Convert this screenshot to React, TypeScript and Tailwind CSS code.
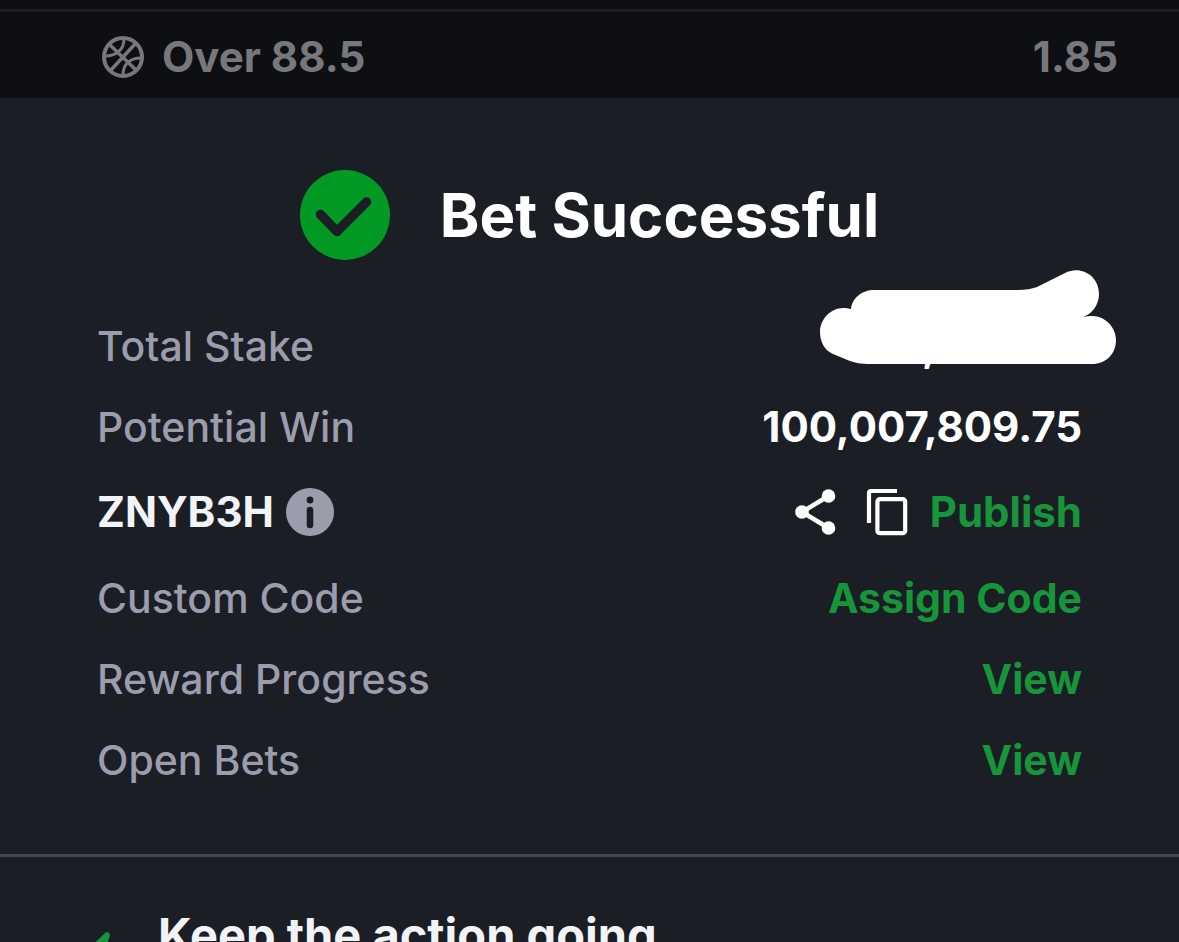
import React from 'react';

// --- Icons ---

const BasketballIcon = () => (
  <svg viewBox="0 0 42 42" className="size-[42px] shrink-0" fill="none" stroke="currentColor" strokeWidth="3" aria-hidden="true">
    <circle cx="21" cy="21" r="19" strokeWidth="4" />
    <path d="M7 8 L35 35 M34 7 L8 35" strokeWidth="3.5" />
    <path d="M22 3 C22 14 14 20 3 20" />
    <path d="M39 22 C28 22 21 28 21 39" />
  </svg>
);

const CheckIcon = () => (
  <svg viewBox="0 0 90 90" className="size-[90px] shrink-0" aria-hidden="true">
    <circle cx="45" cy="45" r="45" fill="#029a24" />
    <path d="M20.5 44.5 L37 61.5 L66.5 32" fill="none" stroke="#1c1e26" strokeWidth="9.5" strokeLinecap="round" strokeLinejoin="round" />
  </svg>
);

const InfoIcon = () => (
  <svg viewBox="0 0 48 48" className="size-12" aria-hidden="true">
    <circle cx="24" cy="24" r="24" fill="#9b9dad" />
    <circle cx="24" cy="12" r="3.4" fill="#1c1e26" />
    <path d="M24 22 V37" stroke="#1c1e26" strokeWidth="6.6" strokeLinecap="round" />
  </svg>
);

const ShareIcon = () => (
  <svg viewBox="0 0 42 48" className="h-12 w-[42px]" aria-hidden="true">
    <path d="M34.5 8 L8 24 L34.5 40" fill="none" stroke="#fff" strokeWidth="4.5" />
    <circle cx="34.5" cy="8" r="6.8" fill="#fff" />
    <circle cx="8" cy="24" r="6.8" fill="#fff" />
    <circle cx="34.5" cy="40" r="6.8" fill="#fff" />
  </svg>
);

const CopyIcon = () => (
  <svg viewBox="0 0 42 48" className="h-12 w-[42px]" fill="none" stroke="#fff" strokeWidth="4.2" aria-hidden="true">
    <path d="M3 35 V5 Q3 3 5 3 H31" />
    <rect x="11.4" y="11.2" width="27.8" height="34" rx="2.5" />
  </svg>
);

const BoltIcon = () => (
  <svg viewBox="0 0 68 60" className="h-[60px] w-[68px] shrink-0" aria-hidden="true">
    <path d="M17 29 L2 43 L-4 55 L8 58 L14 42 L18 30 Z" fill="#17953a" stroke="#17953a" strokeWidth="4" strokeLinejoin="round" />
  </svg>
);

// White marker stroke that hides the stake amount
const Scribble = () => (
  <svg viewBox="0 0 296 95" className="absolute -top-[51px] -right-[34px] h-[95px] w-[296px]" aria-hidden="true">
    <path
      fill="#fff"
      d="M31 39 C32 28 42 20 54 20 H198 C205 20 212 19 217 17 L245 3 C261 -5 279 6 279 24 C279 35 272 44 263 47 Q267 46 272 46 C286 46 296 58 296 70 C296 84 286 94 272 94 H48 Q38 94 30 91 L13 84 C4 80 0 71 0 62 C0 49 11 38 23 38 Q28 38 31 39 Z"
    />
  </svg>
);

// --- Rows ---

type RowProps = {
  label: string;
  children: React.ReactNode;
};

const Row = ({ label, children }: RowProps) => (
  <div className="flex h-[81px] items-center justify-between">
    <dt className="text-[41px] font-medium text-[#9b9dad]">{label}</dt>
    <dd className="font-bold">{children}</dd>
  </div>
);

const links = [
  { label: 'Custom Code', action: 'Assign Code' },
  { label: 'Reward Progress', action: 'View' },
  { label: 'Open Bets', action: 'View' },
];

export default function App() {
  return (
    <div className="flex h-screen flex-col overflow-hidden bg-[#1c1e26] font-['Inter',sans-serif] text-[42px] leading-[50px] text-white">
      <header className="shrink-0 bg-[#0e0f13] pt-[9px] font-bold text-[#77787b]">
        <div className="flex h-[89px] items-center justify-between border-t-3 border-[#1c1e23] pt-1 pr-[61px] pl-[102px]">
          <div className="flex items-center gap-[18px]">
            <BasketballIcon />
            <span>Over 88.5</span>
          </div>
          <span>1.85</span>
        </div>
      </header>

      <main className="shrink-0 border-b-3 border-[#434556] px-[97px] pt-[72px] pb-[54px]">
        <div className="flex items-center justify-center gap-[50px]">
          <CheckIcon />
          <h1 className="text-[60px] leading-[90px] font-bold">Bet Successful</h1>
        </div>

        <dl className="mt-[45px]">
          <Row label="Total Stake">
            <div className="relative flex h-[50px] w-[160px] items-center">
              <span>,</span>
              <Scribble />
            </div>
          </Row>
          <Row label="Potential Win">100,007,809.75</Row>
          <div className="flex h-[90px] items-center justify-between font-bold">
            <dt className="flex items-center gap-3 text-[#f2f3f7]">
              ZNYB3H
              <button type="button" aria-label="Code info">
                <InfoIcon />
              </button>
            </dt>
            <dd className="flex items-center">
              <button type="button" aria-label="Share" className="mr-[30px]">
                <ShareIcon />
              </button>
              <button type="button" aria-label="Copy code" className="mr-[22px]">
                <CopyIcon />
              </button>
              <button type="button" className="text-[#17953a]">Publish</button>
            </dd>
          </div>
          {links.map((link) => (
            <Row key={link.label} label={link.label}>
              <a href="#" className="text-[41px] text-[#17953a]">{link.action}</a>
            </Row>
          ))}
        </dl>
      </main>

      <footer className="flex shrink-0 items-start px-[90px] pt-12 text-[#f2f3f7]">
        <BoltIcon />
        <h2 className="text-[47px] leading-[60px] font-bold">Keep the action going</h2>
      </footer>
    </div>
  );
}
